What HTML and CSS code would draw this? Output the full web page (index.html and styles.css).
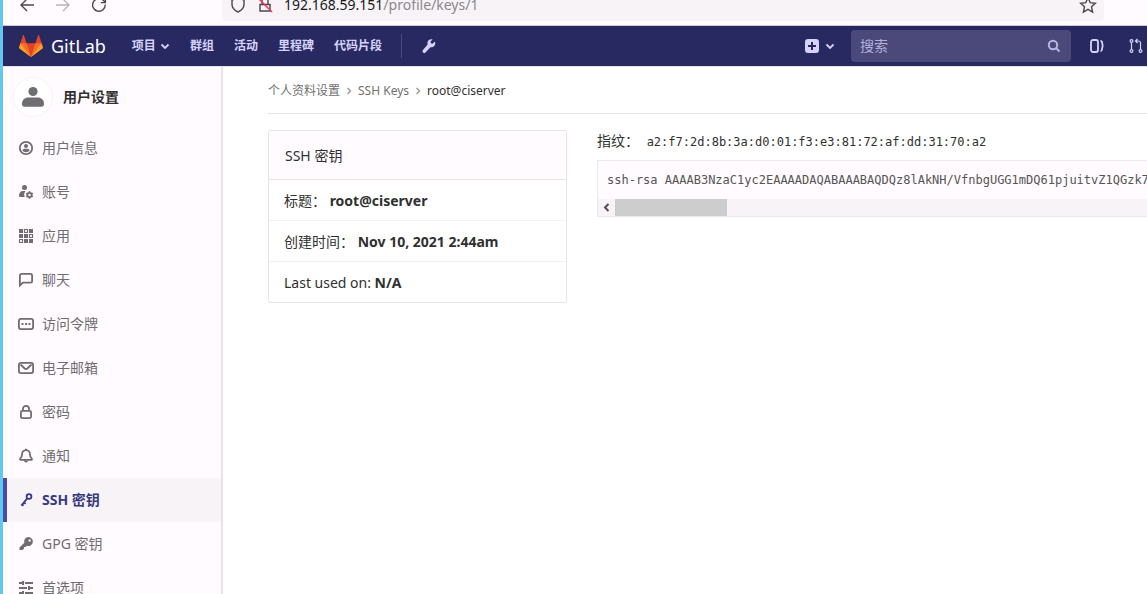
FILE: index.html
```html
<!DOCTYPE html>
<html lang="zh-CN">
<head>
    <meta charset="UTF-8">
    <meta name="viewport" content="width=device-width, initial-scale=1.0">
    <title>SSH 密钥 · GitLab</title>
    <link rel="stylesheet" href="styles.css">
</head>
<body>
    <div class="browser-bar">
        <button class="tool-btn" aria-label="后退"><svg width="16" height="16" viewBox="0 0 16 16"><path d="M15 8H2M8 2L2 8l6 6"/></svg></button>
        <button class="tool-btn disabled" aria-label="前进"><svg width="16" height="16" viewBox="0 0 16 16"><path d="M1 8h13M8 2l6 6-6 6"/></svg></button>
        <button class="tool-btn" aria-label="刷新"><svg width="16" height="16" viewBox="0 0 16 16"><path d="M14.2 7.5a6.3 6.3 0 1 1-2-4.2L14 5M14.4 1v4.6H9.8"/></svg></button>
        <div class="address">
            <svg width="16" height="16" viewBox="0 0 16 16"><path d="M8 1l6 2v4.500c0 3-2.500 5.800-6 7.500-3.500-1.700-6-4.500-6-7.500V3z"/></svg>
            <svg width="16" height="16" viewBox="0 0 16 16"><path d="M3 7.500h10V14H3zM5 7.500V4a3 3 0 0 1 6 0v3.500"/><path class="slash" d="M1 1l14 14"/></svg>
            <div class="url"><span>192.168.59.151</span>/profile/keys/1</div>
            <button class="star" aria-label="收藏"><svg width="18" height="18" viewBox="0 0 18 18"><path d="M9 1.700l2.200 4.900 5.200.6-3.900 3.500 1.100 5.300L9 13.300 4.400 16l1.100-5.300L1.600 7.200l5.200-.6z"/></svg></button>
        </div>
    </div>

    <header class="navbar">
        <a class="brand" href="#">
            <svg width="24" height="24" viewBox="0 0 36 36">
                <path fill="#e24329" d="M2 14l9.380 9v-9l-4-12.280c-.205-.632-1.176-.632-1.380 0z"/>
                <path fill="#e24329" d="M34 14l-9.380 9v-9l4-12.280c.205-.632 1.176-.632 1.380 0z"/>
                <path fill="#e24329" d="M18 34.380L3 14h30z"/>
                <path fill="#fc6d26" d="M18 34.380L11.380 14H2l4 11z"/>
                <path fill="#fc6d26" d="M18 34.380L24.620 14H34l-4 11z"/>
                <path fill="#fca326" d="M2 14L.1 20.160c-.18.565 0 1.200.5 1.560l17.420 12.660z"/>
                <path fill="#fca326" d="M34 14l1.900 6.160c.18.565 0 1.200-.5 1.560L18 34.380z"/>
            </svg>
            <span>GitLab</span>
        </a>
        <nav class="main-nav">
            <a href="#">项目 <svg width="10" height="10" viewBox="0 0 10 10"><path class="line" d="M1.500 3.500L5 7l3.500-3.500"/></svg></a>
            <a href="#">群组</a>
            <a href="#">活动</a>
            <a href="#">里程碑</a>
            <a href="#">代码片段</a>
        </nav>
        <a class="admin" href="#" aria-label="管理"><svg width="16" height="16" viewBox="0 0 16 16"><path d="M13.800 3.500l-2.200 2.200-1.700-.4-.4-1.700 2.200-2.200A4 4 0 0 0 6.600 6.500L2 12.100a1.700 1.700 0 0 0 2.500 2.400l4.900-5.300a4 4 0 0 0 4.400-5.700z"/></svg></a>
        <div class="nav-right">
            <a class="new" href="#" aria-label="新建">
                <svg width="14" height="14" viewBox="0 0 14 14"><path fill-rule="evenodd" d="M3 0h8a3 3 0 0 1 3 3v8a3 3 0 0 1-3 3H3a3 3 0 0 1-3-3V3a3 3 0 0 1 3-3zm3 3v3H3v2h3v3h2V8h3V6H8V3z"/></svg>
                <svg width="10" height="10" viewBox="0 0 10 10"><path class="line" d="M1.500 3.500L5 7l3.500-3.500"/></svg>
            </a>
            <form class="search">
                <input type="search" placeholder="搜索" aria-label="搜索">
                <svg width="14" height="14" viewBox="0 0 14 14"><circle cx="6" cy="6" r="4.200"/><path d="M9 9l3.500 3.500"/></svg>
            </form>
            <a class="counter" href="#" aria-label="议题"><svg width="16" height="16" viewBox="0 0 16 16"><rect class="line" x="2" y="2" width="7" height="12" rx="2"/><path class="line" d="M11.500 3c.8 0 1.300.3 1.600 1 .8 2.500.6 5.500-.3 8-.3.700-.8 1-1.300 1"/></svg></a>
            <a class="counter" href="#" aria-label="合并请求"><svg width="16" height="16" viewBox="0 0 16 16"><g class="thin"><circle cx="3.500" cy="3" r="1.400"/><circle cx="3.500" cy="13" r="1.400"/><circle cx="12.500" cy="13" r="1.400"/><path d="M3.500 4.500v7M12.500 11.500V5a2 2 0 0 0-2-2H8M9.500 1L7.500 3l2 2"/></g></svg></a>
        </div>
    </header>

    <div class="layout">
        <aside class="sidebar">
            <a class="context" href="#">
                <span class="avatar"><svg width="22" height="22" viewBox="0 0 24 24"><circle cx="12" cy="6" r="5"/><path d="M0 19.500C0 15 3 12.500 7 12.500h10c4 0 7 2.500 7 7 0 2-1 3-3 3H3c-2 0-3-1-3-3z"/></svg></span>
                <span>用户设置</span>
            </a>
            <ul>
                <li><a href="#"><svg width="16" height="16" viewBox="0 0 16 16"><circle class="line" cx="8" cy="8" r="6.200"/><circle cx="8" cy="6" r="2"/><path d="M4.500 10.500c0-1 1-1.700 2-1.700h3c1 0 2 .7 2 1.700-.8 1-2 1.700-3.500 1.700s-2.700-.7-3.500-1.700z"/></svg>用户信息</a></li>
                <li><a href="#"><svg width="16" height="16" viewBox="0 0 16 16"><circle cx="6.500" cy="3.500" r="2.500"/><path d="M1 12c0-3 1.500-5 4-5h2.500c-1.500 1.800-1.700 4-.7 6H2.500C1.500 13 1 12.700 1 12z"/><circle class="line" cx="11.500" cy="11" r="2.100"/><path class="line" d="M11.500 7.300v1.200M11.500 13.500v1.200M8.300 9.200l1 .6M13.700 12.200l1 .6M8.300 12.800l1-.6M13.700 9.800l1-.6"/></svg>账号</a></li>
                <li><a href="#"><svg width="16" height="16" viewBox="0 0 16 16"><path d="M1 1h4v4H1zM11 1h4v4h-4zM1 6h4v4H1zM6 6h4v4H6zM6 11h4v4H6zM11 11h4v4h-4z"/><path class="box" d="M6.500 1.500h3v3h-3zM11.500 6.500h3v3h-3zM1.500 11.500h3v3h-3z"/></svg>应用</a></li>
                <li><a href="#"><svg width="16" height="16" viewBox="0 0 16 16"><path class="line" d="M1.900 13.500V3.500a1.600 1.600 0 0 1 1.600-1.600h9a1.600 1.600 0 0 1 1.600 1.600V9a1.600 1.600 0 0 1-1.600 1.600H5z"/></svg>聊天</a></li>
                <li><a href="#"><svg width="16" height="16" viewBox="0 0 16 16"><rect class="line" x=".9" y="2.900" width="14.200" height="10.200" rx="2"/><path d="M3.500 7h2v2h-2zM7 7h2v2H7zM10.500 7h2v2h-2z"/></svg>访问令牌</a></li>
                <li><a href="#"><svg width="16" height="16" viewBox="0 0 16 16"><rect class="line" x=".9" y="2.900" width="14.200" height="10.200" rx="2"/><path class="line" d="M2.500 4.500l4.200 4a2 2 0 0 0 2.600 0l4.200-4"/></svg>电子邮箱</a></li>
                <li><a href="#"><svg width="16" height="16" viewBox="0 0 16 16"><rect class="line" x="2.900" y="6.900" width="10.200" height="7.200" rx="1.500"/><path class="line" d="M5 7V4.800a3 3 0 0 1 6 0V7"/></svg>密码</a></li>
                <li><a href="#"><svg width="16" height="16" viewBox="0 0 16 16"><path class="line" d="M8 2.200c-2.600 0-4 1.800-4 4.300 0 2-.7 3.200-1.800 4.200-.4.500-.2 1.100.5 1.100h10.600c.7 0 .9-.6.500-1.100C12.700 9.700 12 8.500 12 6.500c0-2.500-1.400-4.300-4-4.300z"/><path d="M6 12.500h4a2 2 0 0 1-4 0zM7 .8h2v2H7z"/></svg>通知</a></li>
                <li class="active"><a href="#"><svg width="16" height="16" viewBox="0 0 16 16"><circle class="line" cx="11" cy="4.500" r="2.400"/><path class="line" d="M9.300 6.300l-6 7.200M6 10.500l1.700 1.400M4 12.500l1.500 1.200"/></svg>SSH 密钥</a></li>
                <li><a href="#"><svg width="16" height="16" viewBox="0 0 16 16"><path fill-rule="evenodd" d="M10.500 1a4.500 4.500 0 1 1-1.700 8.700L7.500 11H6v1.500L4.500 14H1.500v-2.500L6.300 6.700A4.500 4.500 0 0 1 10.500 1zm1.200 2.300a1.200 1.200 0 1 0 0 2.400 1.200 1.200 0 0 0 0-2.400z"/></svg>GPG 密钥</a></li>
                <li><a href="#"><svg width="16" height="16" viewBox="0 0 16 16"><path d="M1 2h3V1h2v4H4V4H1zM7 2h8v2H7zM1 7h8v2H1zM10 6h2v1h3v2h-3v1h-2zM1 12h3v-1h2v4H4v-1H1zM7 12h8v2H7z"/></svg>首选项</a></li>
            </ul>
        </aside>

        <main class="content">
            <nav class="breadcrumbs">
                <a href="#">个人资料设置</a>
                <svg width="8" height="8" viewBox="0 0 8 8"><path d="M2.500 1l3 3-3 3"/></svg>
                <a href="#">SSH Keys</a>
                <svg width="8" height="8" viewBox="0 0 8 8"><path d="M2.500 1l3 3-3 3"/></svg>
                <a class="current" href="#">root@ciserver</a>
            </nav>
            <div class="row">
                <section class="card">
                    <h2>SSH 密钥</h2>
                    <ul>
                        <li>标题： <strong>root@ciserver</strong></li>
                        <li>创建时间： <strong>Nov 10, 2021 2:44am</strong></li>
                        <li>Last used on: <strong>N/A</strong></li>
                    </ul>
                </section>
                <section class="key">
                    <p>指纹： <code>a2:f7:2d:8b:3a:d0:01:f3:e3:81:72:af:dd:31:70:a2</code></p>
                    <div class="key-box">
                        <pre>ssh-rsa AAAAB3NzaC1yc2EAAAADAQABAAABAQDQz8lAkNH/VfnbgUGG1mDQ61pjuitvZ1QGzk75u</pre>
                        <div class="scrollbar">
                            <svg width="17" height="17" viewBox="0 0 17 17"><path d="M10.500 5L7 8.500l3.500 3.500"/></svg>
                            <div class="thumb"></div>
                        </div>
                    </div>
                </section>
            </div>
        </main>
    </div>
</body>
</html>
```

FILE: styles.css
```css
* {
    box-sizing: border-box;
}
body {
    margin: 0;
    height: 100vh;
    display: flex;
    flex-direction: column;
    border-left: 3px solid #62c8ef;
    background: #fff;
    color: #303030;
    font-family: "Noto Sans", "Noto Sans CJK SC", sans-serif;
    font-size: 14px;
    line-height: 20px;
    overflow: hidden;
}
a {
    color: inherit;
    text-decoration: none;
}
button {
    padding: 0;
    border: none;
    background: none;
    color: inherit;
}
ul {
    list-style: none;
    margin: 0;
    padding: 0;
}
svg {
    display: block;
    flex: none;
    fill: currentColor;
}
.line {
    fill: none;
    stroke: currentColor;
    stroke-width: 1.8;
}
.box,
.thin {
    fill: none;
    stroke: currentColor;
    stroke-width: 1.2;
}

/* browser toolbar */
.browser-bar {
    flex: none;
    height: 26px;
    padding: 0 43px 4px 16px;
    display: flex;
    align-items: flex-end;
    background: #fffbff;
    border-bottom: 1px solid #cfcbd0;
    color: #4a474d;
}
.browser-bar svg {
    fill: none;
    stroke: currentColor;
    stroke-width: 1.4;
}
.browser-bar .slash {
    stroke: #f0305c;
}
.tool-btn {
    width: 16px;
    height: 32px;
    margin-right: 20px;
}
.tool-btn.disabled {
    color: #b8b5ba;
}
.address {
    flex: 1;
    height: 32px;
    margin-left: 95px;
    padding: 0 7px 0 8px;
    display: flex;
    align-items: center;
    gap: 11px;
    background: #f7f3f7;
    border-radius: 4px;
}
.url {
    flex: 1;
    font-size: 14px;
    color: #8b888d;
}
.url span {
    color: #18171a;
}

/* gitlab header */
.navbar {
    flex: none;
    height: 40px;
    padding: 0 3px 0 16px;
    display: flex;
    align-items: center;
    background: #292961;
    color: #d6d3fa;
}
.brand {
    display: flex;
    align-items: center;
    gap: 8px;
    color: #fff;
    font-size: 18px;
}
.main-nav {
    display: flex;
    gap: 20px;
    margin-left: 26px;
    font-size: 12px;
    font-weight: bold;
}
.main-nav a,
.new {
    display: flex;
    align-items: center;
    gap: 4px;
}
.admin {
    margin-left: 19px;
    padding: 4px 0 4px 19px;
    border-left: 1px solid #4a4980;
}
.nav-right {
    display: flex;
    align-items: center;
    margin-left: auto;
}
.new {
    gap: 6px;
    margin-right: 16px;
}
.search {
    width: 220px;
    height: 32px;
    margin-right: 18px;
    padding: 0 10px 0 9px;
    display: flex;
    align-items: center;
    border-radius: 4px;
    background: #4a497a;
}
.search input {
    flex: 1;
    min-width: 0;
    padding: 0;
    border: none;
    outline: none;
    background: none;
    color: #fff;
    font: inherit;
}
.search input::placeholder {
    color: #b3b0da;
}
.search svg {
    fill: none;
    stroke: #b9b6e4;
    stroke-width: 2;
}
.counter + .counter {
    margin-left: 23px;
}

/* left menu */
.layout {
    flex: 1;
    min-height: 0;
    display: flex;
    border-top: 1px solid #e4e3e6;
}
.sidebar {
    flex: none;
    width: 220px;
    overflow: hidden;
    background: #fffbff;
    border-right: 2px solid #e6e4e7;
}
.context {
    height: 59px;
    padding-left: 10px;
    display: flex;
    align-items: center;
    gap: 10px;
    font-weight: bold;
}
.avatar {
    width: 40px;
    height: 40px;
    display: flex;
    align-items: center;
    justify-content: center;
    border: 1px solid #f7f3f7;
    border-radius: 50%;
    background: #fff;
    color: #706d72;
}
.sidebar li a {
    height: 44px;
    padding-left: 11px;
    display: flex;
    align-items: center;
    gap: 8px;
    border-left: 4px solid transparent;
    color: #706d72;
}
.sidebar .active a {
    border-left-color: #4b4ba3;
    background: #f7f3f7;
    color: #393982;
    font-weight: bold;
}

/* page */
.content {
    flex: 1;
    min-width: 0;
    padding-left: 45px;
}
.breadcrumbs {
    height: 47px;
    padding-top: 2px;
    display: flex;
    align-items: center;
    gap: 5px;
    border-bottom: 1px solid #e5e5e5;
    color: #707070;
    font-size: 12px;
}
.breadcrumbs svg {
    fill: none;
    stroke: #999;
    stroke-width: 1.4;
}
.breadcrumbs .current {
    color: #303030;
}
.row {
    display: grid;
    grid-template-columns: 299px minmax(0, 1fr);
    gap: 30px;
    align-items: start;
    padding-top: 16px;
}
.card {
    border: 1px solid #e5e5e5;
    border-radius: 2px;
}
.card h2 {
    margin: 0;
    padding: 15px 16px 13px;
    background: #fffbff;
    border-bottom: 1px solid #e5e5e5;
    font-size: 14px;
    font-weight: normal;
}
.card li {
    padding: 11px 15px 9px;
}
.card li + li {
    border-top: 1px solid #f2f2f2;
}
.key p {
    margin: 0 0 8px;
    padding-top: 1px;
}
.key code,
.key pre {
    font-family: "DejaVu Sans Mono", monospace;
    font-size: 12px;
}
.key code {
    margin-left: 4px;
}
.key-box {
    border: 1px solid #ebe9ec;
    border-right: none;
    background: #fffbff;
}
.key pre {
    margin: 0;
    padding: 9px;
    overflow: hidden;
    color: #555;
}
.scrollbar {
    height: 17px;
    display: flex;
    background: #f7f3f7;
}
.scrollbar svg {
    fill: none;
    stroke: #505050;
    stroke-width: 2;
}
.thumb {
    width: 112px;
    background: #cdcdcd;
}
```
